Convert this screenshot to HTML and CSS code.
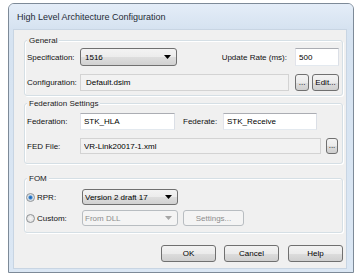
FILE: index.html
```html
<!DOCTYPE html>
<html lang="en">
<head>
    <meta charset="UTF-8">
    <meta name="viewport" content="width=device-width, initial-scale=1.0">
    <title>High Level Architecture Configuration</title>
    <link rel="stylesheet" href="styles.css">
</head>
<body>
    <div class="window">
        <div class="titlebar">High Level Architecture Configuration</div>
        <div class="client">
            <div class="group general">
                <div class="legend">General</div>
                <div class="row spec-row">
                    <span class="label">Specification:</span>
                    <div class="combo spec">
                        <span>1516</span>
                        <svg width="7" height="4" viewBox="0 0 7 4"><path d="M0 0h7L3.5 4z" fill="#000"/></svg>
                    </div>
                    <span class="rate-label">Update Rate (ms):</span>
                    <input class="field rate" type="text" value="500">
                </div>
                <div class="row config-row">
                    <span class="label">Configuration:</span>
                    <input class="field readonly config" type="text" value="Default.dsim" readonly>
                    <button class="btn dots">...</button>
                    <button class="btn edit">Edit...</button>
                </div>
            </div>

            <div class="group federation">
                <div class="legend">Federation Settings</div>
                <div class="row fed-row">
                    <span class="label">Federation:</span>
                    <input class="field fed-name" type="text" value="STK_HLA">
                    <span class="federate-label">Federate:</span>
                    <input class="field federate" type="text" value="STK_Receive">
                </div>
                <div class="row file-row">
                    <span class="label">FED File:</span>
                    <input class="field readonly fed-file" type="text" value="VR-Link20017-1.xml" readonly>
                    <button class="btn dots small">...</button>
                </div>
            </div>

            <div class="group fom">
                <div class="legend">FOM</div>
                <div class="row rpr-row">
                    <label class="option"><span class="radio checked"></span>RPR:</label>
                    <div class="combo fom-combo">
                        <span>Version 2 draft 17</span>
                        <svg width="7" height="4" viewBox="0 0 7 4"><path d="M0 0h7L3.5 4z" fill="#000"/></svg>
                    </div>
                </div>
                <div class="row custom-row">
                    <label class="option"><span class="radio"></span>Custom:</label>
                    <div class="combo fom-combo disabled">
                        <span>From DLL</span>
                        <svg width="7" height="4" viewBox="0 0 7 4"><path d="M0 0h7L3.5 4z" fill="#a6a6a6"/></svg>
                    </div>
                    <button class="btn settings" disabled>Settings...</button>
                </div>
            </div>

            <div class="actions">
                <button class="btn action">OK</button>
                <button class="btn action cancel">Cancel</button>
                <button class="btn action help">Help</button>
            </div>
        </div>
    </div>
</body>
</html>
```

FILE: styles.css
```css
body {
    margin: 0;
    padding: 0;
    background-color: #fff;
    font-family: "Liberation Sans", Arial, sans-serif;
    font-size: 8px;
    color: #111;
}
.window {
    box-sizing: border-box;
    width: 346px;
    height: 270px;
    margin: 3px 0 0 8px;
    border: 1px solid #7d8a98;
    border-radius: 6px 6px 0 0;
    background: linear-gradient(#dbe6f3, #d6e3f1 40px, #dbe7f4);
}
.titlebar {
    height: 26px;
    line-height: 26px;
    padding-left: 8px;
    font-size: 9px;
    color: #1f2a36;
    background: linear-gradient(#e4edf8, #d5e2f0);
    border-radius: 5px 5px 0 0;
}
.client {
    box-sizing: border-box;
    height: 238px;
    margin: 0 7px 0 5px;
    padding: 10px 3px 0 10px;
    background-color: #f0f0f0;
    box-shadow: 0 0 0 1px #c8d5e3;
}
.group {
    border: 1px solid #d5dfe5;
    border-radius: 3px;
    box-shadow: inset 1px 1px 0 #fff, 1px 1px 0 #fff;
    padding: 0 3px 4px 2px;
}
.legend {
    width: fit-content;
    margin-top: -6px;
    padding: 0 2px;
    line-height: 11px;
    background-color: #f0f0f0;
    color: #1a1a1a;
}
.row {
    display: flex;
    align-items: center;
}
.label {
    flex: none;
    width: 53px;
}
.field {
    box-sizing: border-box;
    height: 17px;
    margin: 0;
    padding: 0 3px;
    font: inherit;
    color: #000;
    background-color: #fff;
    border: 1px solid;
    border-color: #abadb3 #dbdfe6 #e3e9ef #e2e3ea;
    outline: none;
}
.field.readonly {
    background-color: #f2f2f2;
    border-color: #d3d3d3;
}
.combo {
    box-sizing: border-box;
    display: flex;
    align-items: center;
    justify-content: space-between;
    height: 18px;
    padding: 0 5px 0 4px;
    border: 1px solid #707070;
    border-radius: 3px;
    background: linear-gradient(#f3f3f3, #ececec 50%, #dedede 50%, #d1d1d1);
    color: #000;
}
.combo.disabled {
    border-color: #b8bdc1;
    background: #f4f4f4;
    color: #8d8d8d;
}
.btn {
    box-sizing: border-box;
    height: 17px;
    margin: 0;
    padding: 0;
    font: inherit;
    color: #000;
    border: 1px solid #707070;
    border-radius: 3px;
    background: linear-gradient(#f3f3f3, #ebebeb 50%, #dddddd 50%, #cfcfcf);
}
.btn:disabled {
    border-color: #b8bdc1;
    background: #f4f4f4;
    color: #8d8d8d;
}

/* General */
.spec-row {
    margin-top: 2px;
}
.combo.spec {
    width: 97px;
}
.rate-label {
    margin-left: auto;
    margin-right: 8px;
}
.field.rate {
    width: 44px;
    height: 18px;
}
.config-row {
    margin-top: 8px;
}
.field.config {
    width: 210px;
    padding-left: 5px;
}
.btn.dots {
    width: 14px;
    margin-left: 6px;
    line-height: 10px;
}
.btn.edit {
    width: 27px;
    margin-left: 3px;
}

/* Federation settings */
.group.federation {
    margin-top: 7px;
    padding-bottom: 9px;
}
.fed-row {
    margin-top: 4px;
}
.field.fed-name {
    width: 95px;
}
.federate-label {
    width: 40px;
    margin-left: 8px;
}
.field.federate {
    width: 94px;
}
.file-row {
    margin-top: 8px;
}
.field.fed-file {
    width: 241px;
    height: 16px;
}
.btn.dots.small {
    width: 12px;
    height: 16px;
    margin-left: 5px;
}

/* FOM */
.group.fom {
    margin-top: 14px;
    padding-bottom: 6px;
}
.rpr-row {
    margin-top: 5px;
}
.custom-row {
    margin-top: 5px;
}
.option {
    display: flex;
    align-items: center;
    gap: 2px;
    width: 55px;
    flex: none;
}
.radio {
    box-sizing: border-box;
    width: 9px;
    height: 9px;
    margin-left: -1px;
    border: 1px solid #8f9396;
    border-radius: 50%;
    background: radial-gradient(circle, #f6f6f6, #d9d9d9);
}
.radio.checked {
    background: radial-gradient(circle, #1b62b0 0, #3a86d2 1.6px, #cfd9e3 2.4px, #f4f4f4 100%);
}
.combo.fom-combo {
    width: 96px;
    height: 16px;
    padding-left: 2px;
}
.btn.settings {
    width: 61px;
    height: 16px;
    margin-left: 5px;
}

/* Dialog buttons */
.actions {
    display: flex;
    justify-content: flex-end;
    margin-top: 12px;
}
.btn.action {
    width: 55px;
}
.btn.cancel {
    margin-left: 8px;
}
.btn.help {
    margin-left: 9px;
}
```
